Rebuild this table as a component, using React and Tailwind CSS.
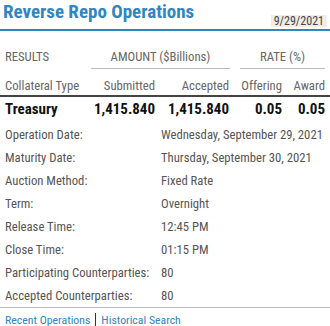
const details = [
  ['Operation Date:', 'Wednesday, September 29, 2021'],
  ['Maturity Date:', 'Thursday, September 30, 2021'],
  ['Auction Method:', 'Fixed Rate'],
  ['Term:', 'Overnight'],
  ['Release Time:', '12:45 PM'],
  ['Close Time:', '01:15 PM'],
  ['Participating Counterparties:', '80'],
  ['Accepted Counterparties:', '80'],
]

export default function App() {
  return (
    <div
      className="w-[330px] h-[326px] bg-white overflow-hidden"
      style={{ fontFamily: '"Roboto Condensed", "Liberation Sans Narrow", Roboto, sans-serif' }}
    >
      <div className="flex items-end justify-between h-[31px] border-b-2 border-[#2f86c0] px-[3px]">
        <h1 className="text-[19px] font-bold text-[#2f86c0] leading-none pb-[8px]">Reverse Repo Operations</h1>
        <span className="bg-[#f0ede8] text-[#444] text-[12px] leading-[12px] px-[3px] mb-[2px]">9/29/2021</span>
      </div>

      <div className="flex text-[12.7px] text-[#666] mt-[18px] px-[5px] leading-[16px]">
        <div className="w-[86px]">RESULTS</div>
        <div className="w-[139px] text-center border-b border-[#bbb] pb-[3px]">AMOUNT ($Billions)</div>
        <div className="w-[10px]" />
        <div className="flex-1 text-center border-b border-[#bbb] pb-[3px]">RATE (%)</div>
      </div>

      <div className="flex text-[12.7px] text-[#666] leading-[16px] px-[5px] pt-[9px] pb-[1px] border-b-2 border-[#444]">
        <div className="w-[80px]">Collateral Type</div>
        <div className="w-[70px] text-right">Submitted</div>
        <div className="w-[74px] text-right">Accepted</div>
        <div className="w-[53px] text-right">Offering</div>
        <div className="flex-1 text-right">Award</div>
      </div>

      <div className="flex text-[15px] font-bold text-[#111] leading-[20px] px-[5px] pt-[2px]">
        <div className="w-[80px]">Treasury</div>
        <div className="w-[70px] text-right">1,415.840</div>
        <div className="w-[74px] text-right">1,415.840</div>
        <div className="w-[53px] text-right">0.05</div>
        <div className="flex-1 text-right">0.05</div>
      </div>

      <div className="mt-[4px] px-[5px] text-[12.7px] text-[#555]">
        {details.map(([label, value]) => (
          <div key={label} className="flex items-center h-[23px] whitespace-nowrap">
            <div className="w-[156px] shrink-0">{label}</div>
            <div>{value}</div>
          </div>
        ))}
      </div>

      <div className="border-t border-[#bbb] px-[5px] pt-[5px] flex items-center text-[11.8px] leading-[14px] text-[#2f86c0]">
        <span>Recent Operations</span>
        <span className="w-px h-[14px] bg-[#333] mx-[5px]" />
        <span>Historical Search</span>
      </div>
    </div>
  )
}
